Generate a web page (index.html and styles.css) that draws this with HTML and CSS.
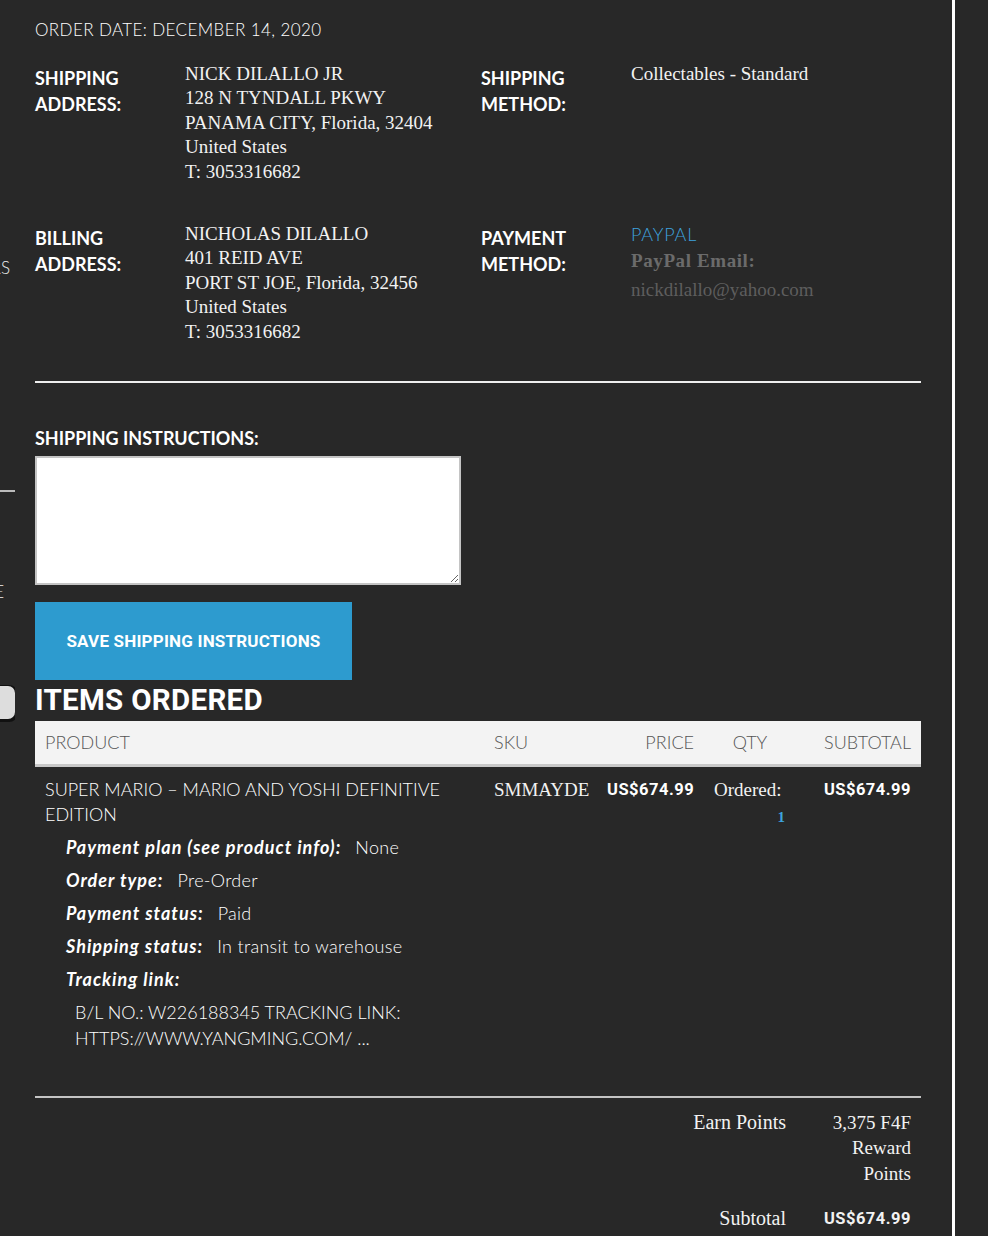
FILE: index.html
```html
<!DOCTYPE html>
<html lang="en">
<head>
    <meta charset="UTF-8">
    <meta name="viewport" content="width=device-width, initial-scale=1.0">
    <title>Order #100004821</title>
    <link rel="stylesheet" href="styles.css">
</head>
<body>
    <div class="page">
        <aside class="sidebar">
            <div class="side-link side-first">MY ORDERS</div>
            <div class="side-rule"></div>
            <div class="side-link side-second">LOGOUT ACCOUNT PROFILE</div>
            <div class="side-button"></div>
        </aside>

        <main class="content">
            <p class="order-date">ORDER DATE: DECEMBER 14, 2020</p>

            <div class="info-grid">
                <div class="info-block">
                    <div class="info-label">SHIPPING<br>ADDRESS:</div>
                    <address class="info-value">
                        NICK DILALLO JR<br>
                        128 N TYNDALL PKWY<br>
                        PANAMA CITY, Florida, 32404<br>
                        United States<br>
                        T: 3053316682
                    </address>
                </div>
                <div class="info-block">
                    <div class="info-label">SHIPPING<br>METHOD:</div>
                    <div class="info-value">Collectables - Standard</div>
                </div>
                <div class="info-block">
                    <div class="info-label">BILLING<br>ADDRESS:</div>
                    <address class="info-value">
                        NICHOLAS DILALLO<br>
                        401 REID AVE<br>
                        PORT ST JOE, Florida, 32456<br>
                        United States<br>
                        T: 3053316682
                    </address>
                </div>
                <div class="info-block">
                    <div class="info-label">PAYMENT<br>METHOD:</div>
                    <div class="info-value">
                        <div class="pay-name">PAYPAL</div>
                        <div class="pay-email-label">PayPal Email:</div>
                        <div class="pay-email">nickdilallo@yahoo.com</div>
                    </div>
                </div>
            </div>

            <hr class="divider">

            <form class="instructions">
                <label for="instructions">SHIPPING INSTRUCTIONS:</label>
                <textarea id="instructions" name="instructions"></textarea>
                <button type="button">SAVE SHIPPING INSTRUCTIONS</button>
            </form>

            <h2 class="items-title">ITEMS ORDERED</h2>

            <table class="items">
                <thead>
                    <tr>
                        <th class="col-product">PRODUCT</th>
                        <th class="col-sku">SKU</th>
                        <th class="col-price">PRICE</th>
                        <th class="col-qty">QTY</th>
                        <th class="col-subtotal">SUBTOTAL</th>
                    </tr>
                </thead>
                <tbody>
                    <tr>
                        <td class="col-product">
                            <div class="product-name">SUPER MARIO – MARIO AND YOSHI DEFINITIVE EDITION</div>
                            <dl class="options">
                                <div class="option"><dt>Payment plan (see product info):</dt><dd>None</dd></div>
                                <div class="option"><dt>Order type:</dt><dd>Pre-Order</dd></div>
                                <div class="option"><dt>Payment status:</dt><dd>Paid</dd></div>
                                <div class="option"><dt>Shipping status:</dt><dd>In transit to warehouse</dd></div>
                                <div class="option option-block"><dt>Tracking link:</dt><dd>B/L NO.: W226188345 TRACKING LINK: HTTPS://WWW.YANGMING.COM/ ...</dd></div>
                            </dl>
                        </td>
                        <td class="col-sku serif">SMMAYDE</td>
                        <td class="col-price price">US$674.99</td>
                        <td class="col-qty serif">
                            <div>Ordered:</div>
                            <div class="qty-num">1</div>
                        </td>
                        <td class="col-subtotal price">US$674.99</td>
                    </tr>
                </tbody>
            </table>

            <hr class="divider divider-gray">

            <table class="totals">
                <tr>
                    <th>Earn Points</th>
                    <td>3,375 F4F Reward Points</td>
                </tr>
                <tr>
                    <th>Subtotal</th>
                    <td class="price">US$674.99</td>
                </tr>
            </table>
        </main>

        <div class="right-panel"></div>
    </div>
</body>
</html>
```

FILE: styles.css
```css
/* Global Styling */
body {
    margin: 0;
    padding: 0;
    background: #282828;
    color: #fff;
    font-family: 'Lato', 'Open Sans', sans-serif;
}

.page {
    display: flex;
    min-height: 1236px;
}

/* Cut-off account sidebar on the left */
.sidebar {
    width: 15px;
    overflow: hidden;
    display: flex;
    flex-direction: column;
}

.side-link {
    display: flex;
    justify-content: flex-end;
    white-space: nowrap;
    padding-right: 5px;
    font-size: 17px;
    line-height: 20px;
    font-weight: 300;
    color: #eee;
}

.side-first {
    margin-top: 258px;
}

.side-rule {
    margin-top: 212px;
    height: 2px;
    background: #bbb;
}

.side-second {
    margin-top: 90px;
    padding-right: 11px;
}

.side-button {
    margin-top: 84px;
    margin-left: -10px;
    height: 33px;
    background: #ddd;
    border-radius: 7px;
    box-shadow: 1px 1px 0 2px #111;
}

/* Main order content */
.content {
    width: 886px;
    padding: 20px 31px 0 20px;
}

.order-date {
    margin: 0;
    font-size: 17px;
    line-height: 20px;
    font-weight: 300;
    letter-spacing: 0.4px;
}

.info-grid {
    display: grid;
    grid-template-columns: 446px 1fr;
    row-gap: 38px;
    margin-top: 22px;
}

.info-block {
    display: flex;
}

.info-label {
    width: 150px;
    flex-shrink: 0;
    padding-top: 3px;
    font-size: 18px;
    line-height: 26px;
    font-weight: 700;
}

.info-value {
    font-family: 'Liberation Serif', serif;
    font-style: normal;
    font-size: 19px;
    line-height: 24.4px;
    color: #f2f2f2;
}

.pay-name {
    font-family: 'Lato', sans-serif;
    font-weight: 300;
    font-size: 18px;
    letter-spacing: 0.8px;
    color: #3ea2de;
}

.pay-email-label {
    font-weight: 700;
    letter-spacing: 0.6px;
    color: #6b6b6b;
    margin-top: 3px;
}

.pay-email {
    color: #5e5e5e;
    margin-top: 4px;
}

.divider {
    border: none;
    height: 2px;
    background: #eee;
    margin: 37px 0 0;
}

.divider-gray {
    background: #c4c4c4;
    margin-top: 0;
}

/* Shipping instructions */
.instructions {
    margin-top: 45px;
    display: flex;
    flex-direction: column;
    align-items: flex-start;
}

.instructions label {
    font-size: 18px;
    line-height: 20px;
    font-weight: 700;
}

.instructions textarea {
    box-sizing: border-box;
    width: 426px;
    height: 129px;
    margin-top: 8px;
    border: 2px solid #c4c4c4;
    background: #fff;
}

.instructions button {
    margin-top: 17px;
    width: 317px;
    height: 78px;
    border: none;
    background: #2d9bcf;
    color: #fff;
    font-family: 'Roboto', sans-serif;
    font-weight: 700;
    font-size: 17px;
    letter-spacing: 0.2px;
    cursor: pointer;
}

.items-title {
    margin: 0;
    font-family: 'Roboto', sans-serif;
    font-weight: 700;
    font-size: 29.5px;
    line-height: 41px;
    letter-spacing: 0.3px;
}

/* Items table */
.items {
    width: 100%;
    table-layout: fixed;
    border-collapse: collapse;
    font-size: 18px;
}

.items th,
.items td {
    box-sizing: border-box;
}

.items th {
    background: #f3f3f3;
    color: #555;
    font-weight: 300;
    height: 44px;
    padding: 0 10px;
    border-bottom: 3px solid #c8c8c8;
    text-align: left;
}

.items td {
    vertical-align: top;
    padding: 10px 10px 45px;
    line-height: 25px;
    font-weight: 300;
}

.col-product {
    width: 449px;
}

.col-sku {
    width: 113px;
}

.items .col-price {
    width: 107px;
    text-align: right;
}

.items .col-qty {
    width: 92px;
    text-align: center;
}

.items .col-subtotal {
    width: 125px;
    text-align: right;
}

.serif {
    font-family: 'Liberation Serif', serif;
    font-size: 19px;
    color: #f2f2f2;
}

.items td.col-qty {
    text-align: left;
}

.qty-num {
    text-align: right;
    padding-right: 1px;
    color: #3ea2de;
    font-weight: 700;
    font-size: 15px;
    line-height: 30px;
}

.items td.price,
.totals td.price {
    font-family: 'Roboto', sans-serif;
    font-weight: 700;
    font-size: 16.5px;
    letter-spacing: 0.5px;
}

.product-name {
    padding-right: 10px;
}

.options {
    margin: 4px 0 0 21px;
}

.option {
    display: flex;
    line-height: 33px;
}

.option dt {
    font-style: italic;
    font-weight: 700;
    letter-spacing: 1px;
    margin-right: 14px;
}

.option dd {
    margin: 0;
    letter-spacing: 0.3px;
}

.option-block {
    flex-direction: column;
}

.option-block dd {
    margin: 3px 0 0 9px;
    line-height: 26px;
    letter-spacing: 0;
    width: 340px;
}

/* Totals */
.totals {
    width: 100%;
    border-collapse: collapse;
    margin-top: 12px;
    font-family: 'Liberation Serif', serif;
    font-size: 19px;
    line-height: 25.5px;
    color: #f2f2f2;
}

.totals th {
    font-weight: normal;
    font-size: 20px;
    text-align: right;
    vertical-align: top;
    padding: 0 10px 20px;
}

.totals td {
    width: 105px;
    text-align: right;
    vertical-align: top;
    padding: 0 10px 20px;
}

.right-panel {
    flex: 1;
    border-left: 3px solid #fff;
}
```
